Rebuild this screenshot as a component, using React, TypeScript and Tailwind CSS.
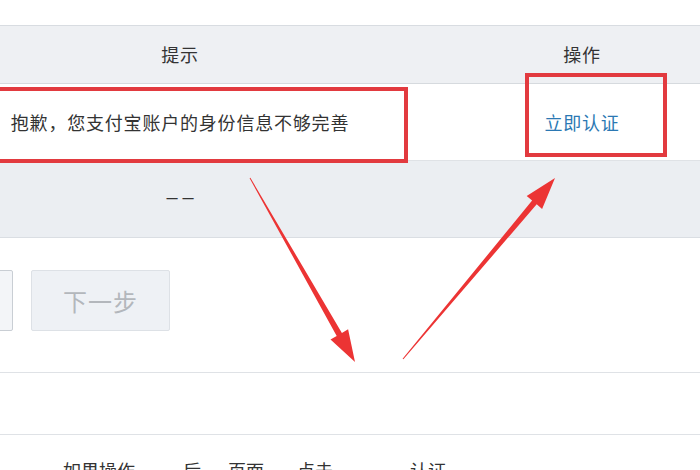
const font = { fontFamily: '"Noto Sans CJK SC", "Noto Sans", sans-serif' };

const Arrows = () => (
  <svg className="absolute left-0 top-0" width="700" height="470" viewBox="0 0 700 470">
    <polygon
      fill="#ec3434"
      points="249.6,178.2 336.7,335.9 330.5,339.5 355,362 348.1,329.3 341.9,332.9 250.4,177.8"
    />
    <polygon
      fill="#ec3434"
      points="402.6,358.7 532.1,200.5 526.7,196 555,178 542.1,208.9 536.7,204.3 403.4,359.3"
    />
  </svg>
);

export default function App() {
  return (
    <div className="relative w-[700px] h-[470px] overflow-hidden bg-white text-[#333]" style={font}>
      <div className="pt-[25px]">
        {/* table */}
        <div className="border-t border-[#d8dce1]">
          <div className="flex h-[58px] items-center bg-[#eef0f3] border-b border-[#d6dade] text-[18px] tracking-[0.8px]">
            <div className="w-[360px] text-center">提示</div>
            <div className="w-[104px]" />
            <div className="w-[236px] text-center">操作</div>
          </div>
          <div className="flex h-[77px] items-center bg-white border-b border-[#dfe2e6] text-[18px] tracking-[0.8px]">
            <div className="w-[360px] text-center">抱歉，您支付宝账户的身份信息不够完善</div>
            <div className="w-[104px]" />
            <div className="w-[236px] text-center text-[#2b78b3]">立即认证</div>
          </div>
          <div className="flex h-[77px] items-center bg-[#ebeef2] border-b border-[#dadee3]">
            <div
              className="w-[360px] text-center text-[20px] tracking-[5px] pl-[5px] pb-[4px]"
              style={{ fontFamily: '"Liberation Sans", sans-serif' }}
            >
              ––
            </div>
          </div>
        </div>

        {/* buttons */}
        <div className="flex gap-[18px] mt-[32px] h-[61px]">
          <div className="ml-[-100px] w-[113px] rounded-[2px] border border-[#c9ced4] bg-[#f3f5f8]" />
          <div className="w-[139px] flex items-center justify-center rounded-[2px] border border-[#dde1e6] bg-[#eef1f5] text-[24px] text-[#b3b7bc] tracking-[1px]">
            下一步
          </div>
        </div>

        <div className="mt-[41px] h-[63px] border-t border-b border-[#dfe2e6]" />

        <div className="flex mt-[26px] text-[18px] leading-none">
          <span className="ml-[63px]">如果操作</span>
          <span className="ml-[48px]">后</span>
          <span className="ml-[27px]">页面</span>
          <span className="ml-[33px]">点击</span>
          <span className="ml-[77px]">认证</span>
        </div>
      </div>

      {/* annotations */}
      <div className="absolute left-[-10px] top-[87px] w-[418px] h-[76px] border-[4px] border-[#e23a3f]" />
      <div className="absolute left-[525px] top-[73px] w-[142px] h-[84px] border-[4px] border-[#e23a3f]" />
      <Arrows />
    </div>
  );
}
